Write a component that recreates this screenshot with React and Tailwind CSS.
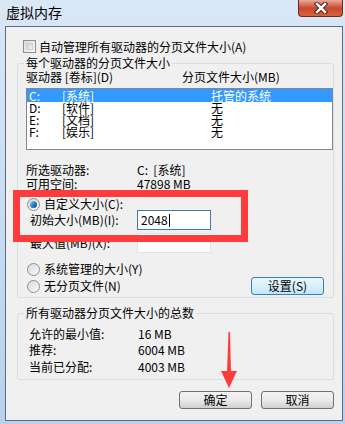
import React from "react";

const font = { fontFamily: '"Noto Sans CJK SC", "Noto Sans", sans-serif' };

const drives = [
  { d: "C:", label: "[系统]", size: "托管的系统", selected: true },
  { d: "D:", label: "[软件]", size: "无" },
  { d: "E:", label: "[文档]", size: "无" },
  { d: "F:", label: "[娱乐]", size: "无" },
];

function Radio({ checked }) {
  return (
    <div className="w-[13px] h-[13px] rounded-full border border-[#8e8f8f] bg-gradient-to-br from-[#d8d8d8] to-[#fbfbfb] flex items-center justify-center shrink-0">
      {checked && (
        <div className="w-[7px] h-[7px] rounded-full bg-gradient-to-br from-[#a6d4f5] via-[#2a7fc9] to-[#0e4c96]" />
      )}
    </div>
  );
}

function Button({ children, blue }) {
  return (
    <div
      className={
        "w-[73px] h-[18px] rounded-[3px] border flex items-center justify-center text-[12px] leading-[12px] " +
        (blue
          ? "border-[#3c7fb1] bg-gradient-to-b from-[#eaf6fd] via-[#d9f0fc] to-[#bee6fd]"
          : "border-[#707070] bg-gradient-to-b from-[#f2f2f2] via-[#ebebeb] to-[#cfcfcf]")
      }
    >
      {children}
    </div>
  );
}

export default function App() {
  return (
    <div
      className="relative w-[345px] h-[424px] overflow-hidden bg-gradient-to-b from-[#d9e7f6] to-[#b9d1ec] text-black"
      style={font}
    >
      {/* title bar */}
      <div className="h-[26px] flex justify-between items-start">
        <div className="pl-[6px] pt-[3px] text-[14px] leading-[18px]">虚拟内存</div>
        <div className="mr-[2px] w-[45px] h-[17px] rounded-b-[4px] border border-t-0 border-[#6d2a1f] bg-gradient-to-b from-[#e8a898] via-[#c9472f] to-[#d6623f] flex items-center justify-center">
          <svg width="16" height="12" viewBox="0 0 16 12">
            <path d="M4 2 L12 10 M12 2 L4 10" stroke="#4a1a12" strokeWidth="4.5" strokeLinecap="square" />
            <path d="M4 2 L12 10 M12 2 L4 10" stroke="#ffffff" strokeWidth="2.5" strokeLinecap="square" />
          </svg>
        </div>
      </div>

      {/* dialog body */}
      <div className="ml-[5px] w-[338px] h-[395px] border border-[#5a6c80] bg-[#f0f0f0] text-[12px] leading-[12px]">
        <div className="mt-[13px] pl-[17px] h-[13px] flex items-center gap-[3px]">
          <div className="w-[13px] h-[13px] border border-[#8e8f8f] bg-gradient-to-br from-[#dcdcdc] to-[#f8f8f8] p-[2px]">
            <div className="w-full h-full border border-[#d0d0d0] bg-gradient-to-br from-[#cfcfcf] to-[#f3f3f3]" />
          </div>
          <span>自动管理所有驱动器的分页文件大小(A)</span>
        </div>

        <fieldset className="mt-[4px] ml-[11px] w-[317px] border border-[#d5dfe5] rounded-[3px] pb-[2px]">
          <legend className="ml-[6px] px-[2px] h-[12px]">每个驱动器的分页文件大小</legend>
          <div className="pl-[8px]">
            <div className="mt-[2px] h-[12px] flex">
              <span className="w-[156px]">驱动器 [卷标](D)</span>
              <span>分页文件大小(MB)</span>
            </div>
            <div className="mt-[5px] w-[307px] h-[62px] border border-[#828790] bg-white">
              {drives.map((r, i) => (
                <div
                  key={r.d}
                  className={
                    "flex items-center pl-[2px] " +
                    (i === 0 ? "h-[13px] " : "h-[12px] ") +
                    (r.selected ? "bg-[#3399ff] text-white" : "")
                  }
                >
                  <span className="w-[33px]">{r.d}</span>
                  <span className="w-[149px]">{r.label}</span>
                  <span>{r.size}</span>
                </div>
              ))}
            </div>

            <div className="mt-[14px] h-[14px] flex">
              <span className="w-[111px]">所选驱动器:</span>
              <span>C:&nbsp;&nbsp;[系统]</span>
            </div>
            <div className="h-[14px] flex">
              <span className="w-[111px]">可用空间:</span>
              <span>47898 MB</span>
            </div>

            <div className="mt-[6px] h-[12px] flex items-center gap-[4px] pl-[1px]">
              <Radio checked />
              <span>自定义大小(C):</span>
            </div>
            <div className="h-[20px] flex items-center">
              <span className="w-[111px] pl-[4px]">初始大小(MB)(I):</span>
              <div className="w-[74px] h-[20px] border border-[#3d7bad] bg-white flex items-center pl-[3px]">
                <span>2048</span>
                <span className="w-[1px] h-[13px] bg-black ml-[1px]" />
              </div>
            </div>
            <div className="mt-[3px] h-[20px] flex items-center">
              <span className="w-[111px] pl-[4px]">最大值(MB)(X):</span>
              <div className="w-[74px] h-[20px] border border-[#e2e3ea] bg-white" />
            </div>

            <div className="mt-[10px] h-[12px] flex items-center gap-[4px] pl-[1px]">
              <Radio />
              <span>系统管理的大小(Y)</span>
            </div>
            <div className="mt-[2px] h-[18px] flex items-center pl-[1px] pr-[9px]">
              <Radio />
              <span className="ml-[4px]">无分页文件(N)</span>
              <div className="ml-auto">
                <Button blue>设置(S)</Button>
              </div>
            </div>
          </div>
        </fieldset>

        <fieldset className="mt-[9px] ml-[11px] w-[317px] border border-[#d5dfe5] rounded-[3px] pb-[6px]">
          <legend className="ml-[6px] px-[2px] h-[12px]">所有驱动器分页文件大小的总数</legend>
          <div className="pl-[11px] mt-[8px] flex flex-col gap-[3.5px]">
            <div className="h-[13px] flex items-center">
              <span className="w-[109px]">允许的最小值:</span>
              <span>16 MB</span>
            </div>
            <div className="h-[13px] flex items-center">
              <span className="w-[109px]">推荐:</span>
              <span>6004 MB</span>
            </div>
            <div className="h-[13px] flex items-center">
              <span className="w-[109px]">当前已分配:</span>
              <span>4003 MB</span>
            </div>
          </div>
        </fieldset>

        <div className="mt-[11px] pr-[8px] flex justify-end gap-[9px]">
          <Button>确定</Button>
          <Button>取消</Button>
        </div>
      </div>

      {/* annotation overlays */}
      <div className="absolute left-[13px] top-[190px] w-[235px] h-[52px] border-[7px] border-[#ff3b3b]" />
      <svg className="absolute left-[219px] top-[330px]" width="20" height="60" viewBox="0 0 20 60">
        <path d="M9.5 2 L11 2 L12 42 L8 42 Z" fill="#ff3b3b" />
        <path d="M2 41 L18 41 L10 58 Z" fill="#ff3b3b" />
      </svg>
    </div>
  );
}
